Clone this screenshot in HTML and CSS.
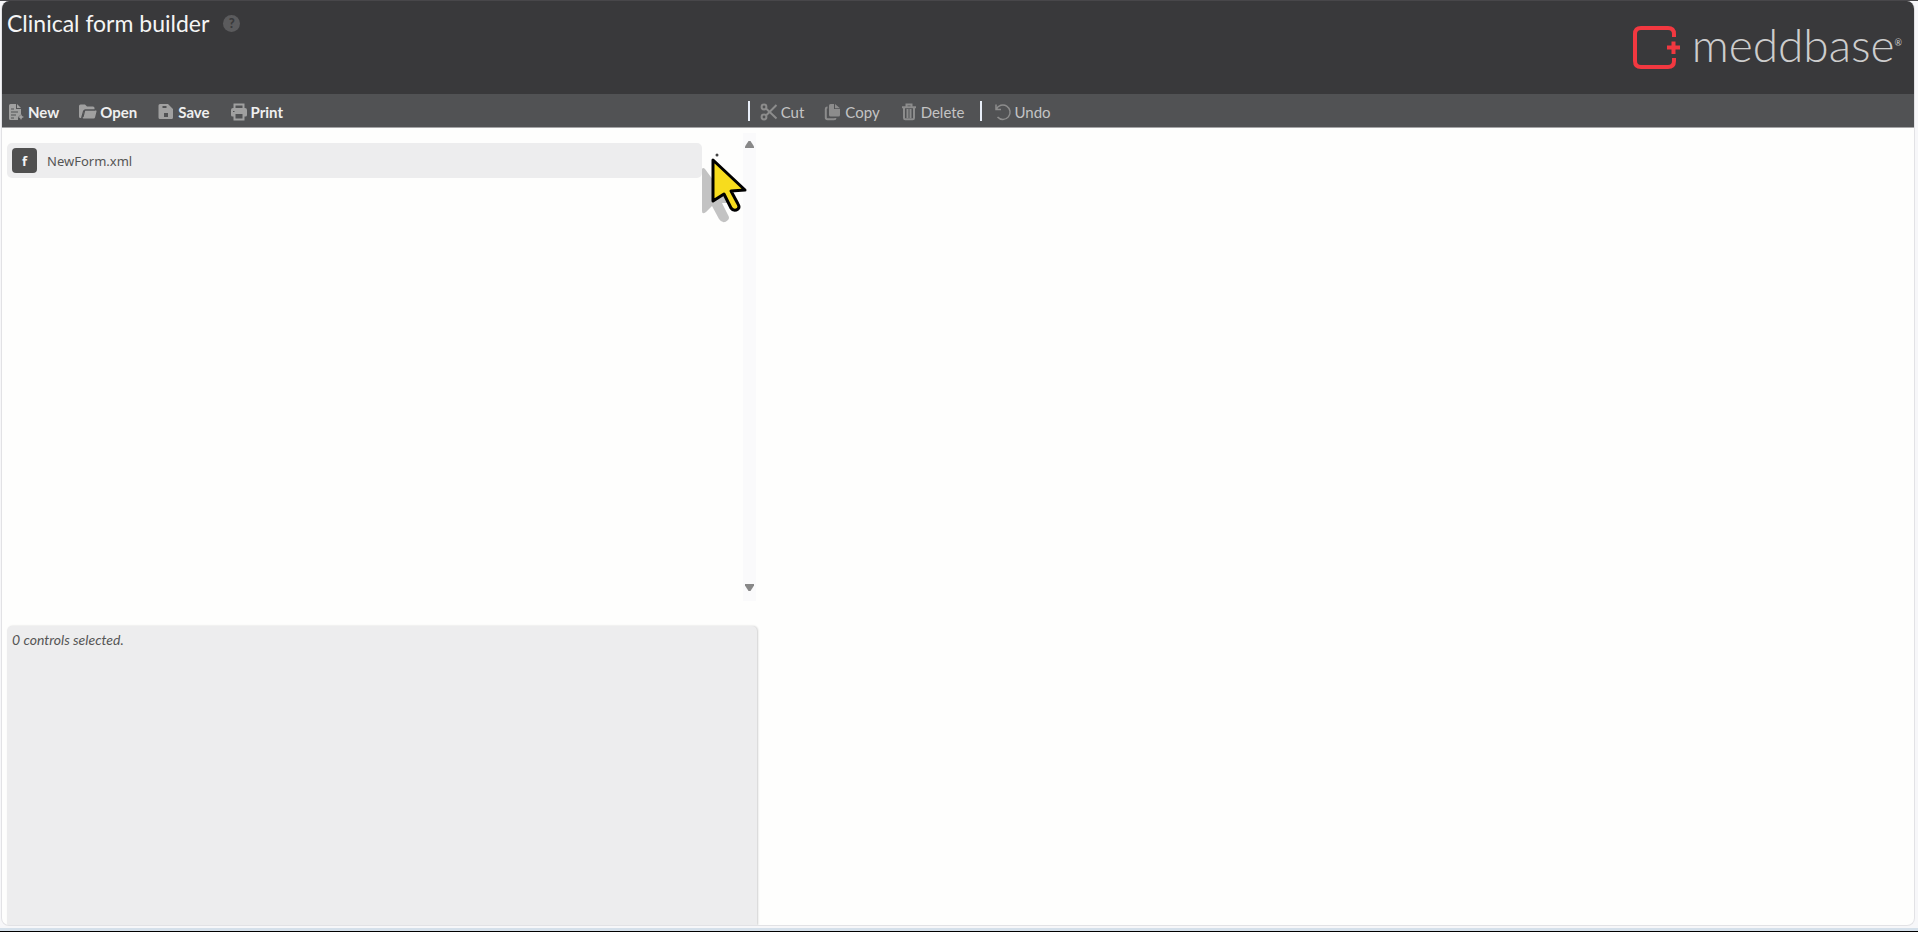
FILE: index.html
```html
<!DOCTYPE html>
<html lang="en">
<head>
<meta charset="utf-8">
<title>Clinical form builder</title>
<link rel="stylesheet" href="styles.css">
</head>
<body>
<div class="window">
  <header class="header">
    <div class="heading">
      <h1 class="title">Clinical form builder</h1>
      <button class="help" type="button" aria-label="Help">?</button>
    </div>
    <div class="brand">
      <svg class="brand-mark" viewBox="0 0 48 44" aria-hidden="true">
        <path d="M41 11V8Q41 2 35 2H8Q2 2 2 8V35Q2 41 8 41H35Q41 41 41 35V32" fill="none" stroke="#f23840" stroke-width="4"/>
        <path d="M34 21.500H47M40.500 15.500V28" fill="none" stroke="#f23840" stroke-width="4"/>
      </svg>
      <span class="brand-name">meddbase</span><span class="brand-reg">®</span>
    </div>
  </header>

  <nav class="toolbar" aria-label="Form tools">
    <div class="tools tools-file">
      <button class="tool" type="button">
        <svg class="icon" viewBox="0 0 18 18" aria-hidden="true"><path class="fill" d="M3.500 1H9v5h5v5.500L11 14v3H3.500Q2 17 2 15.500v-13Q2 1 3.500 1zM10 1l4 4h-4z"/><path d="M4 6h3M4 9h7M4 12h5M4 15h3" class="cut"/><path class="fill" d="M14 11l1 2 2 1-2 1-1 2-1-2-2-1 2-1z"/></svg>
        New</button>
      <button class="tool" type="button">
        <svg class="icon" viewBox="0 0 18 18" aria-hidden="true"><path class="fill" d="M0 3Q0 1.500 1.500 1.500H6l2 2h6q1.500 0 1.500 1.500v1.500H6q-1.500 0-2 1.500l-2 7H1.500Q0 15 0 13.500z"/><path d="M6 7.500h11q.8 0 .5 1l-1.500 6q-.3 1-1.300 1H4.500q-1 0-.7-1L5 8.500q.2-1 1-1z" class="fill"/><path class="cut" d="M4 14l1.500-6q.2-1 1-1H16"/></svg>
        Open</button>
      <button class="tool" type="button">
        <svg class="icon" viewBox="0 0 18 18" aria-hidden="true"><path class="fill" fill-rule="evenodd" d="M3 1h8l5 5v8.500q0 1.500-1.500 1.500H3q-1.500 0-1.500-1.500v-12Q1.500 1 3 1zM5.500 3v2h4V3zM7 10v4h4v-4z"/></svg>
        Save</button>
      <button class="tool" type="button">
        <svg class="icon" viewBox="0 0 18 18" aria-hidden="true"><path class="fill" d="M3 5h12q2 0 2 2v5q0 1.500-1.500 1.500H14V11H4v2.500H2.500Q1 13.500 1 12V7q0-2 2-2z"/><path class="line" d="M4.500 6V1.500h9V6M4.500 11v5.500h9V11"/><path class="cut" d="M3 8.500h1.500"/></svg>
        Print</button>
    </div>
    <div class="tools tools-edit">
      <button class="tool" type="button" disabled>
        <svg class="icon" viewBox="0 0 18 18" aria-hidden="true"><circle class="line" cx="4" cy="4" r="2.400"/><circle class="line" cx="4" cy="14" r="2.400"/><path class="line" d="M6 5.500L16.500 15.500M6 12.500L16.500 2"/></svg>
        Cut</button>
      <button class="tool" type="button" disabled>
        <svg class="icon" viewBox="0 0 18 18" aria-hidden="true"><path class="fill" d="M6.500 1H10v5h6v6q0 1.500-1.500 1.500h-8Q5 13.500 5 12V2.500Q5 1 6.500 1zM11 1l5 4.200h-5z"/><path class="line" d="M3.500 4.500H3Q1.800 4.500 1.800 6v8.500Q1.800 16.200 3.500 16.200H10q1.500 0 1.500-1.200"/></svg>
        Copy</button>
      <button class="tool" type="button" disabled>
        <svg class="icon" viewBox="0 0 18 18" aria-hidden="true"><path class="line" d="M2 4.200h14M6.500 4V1.500h5V4M4 5v10q0 1.300 1.300 1.300h7.400q1.300 0 1.300-1.300V5M7.500 6v9M10.500 6v9"/></svg>
        Delete</button>
      <span class="divider"></span>
      <button class="tool" type="button" disabled>
        <svg class="icon" viewBox="0 0 18 18" aria-hidden="true"><path class="line thin" d="M2 1.500v5h5M2.300 6.300A7.200 7.200 0 1 1 3.500 14"/></svg>
        Undo</button>
    </div>
  </nav>

  <main class="workspace">
    <aside class="side">
      <section class="files" aria-label="Forms">
        <div class="file-row">
          <button class="file" type="button"><span class="badge">f</span>NewForm.xml</button>
          <button class="more" type="button" aria-label="More options">
            <svg class="more-dot" viewBox="0 0 4 4" aria-hidden="true"><circle cx="2" cy="2" r="1.500"/></svg>
            <svg class="pointer" viewBox="0 0 50 70" aria-hidden="true">
              <path class="pointer-shade" d="M2 13V55Q2 59 6 56L12 50L19 63Q23 69 28 64Q30 62 28 59L22 47H30L5 13Q3 11 2 13z"/>
              <path class="pointer-body" d="M13 4V45L24 38L31 52Q34 56 38 53Q40 51 38 48L31 35L45 34Z"/>
            </svg>
          </button>
        </div>
        <div class="scroll">
          <svg class="arrow" viewBox="0 0 9 7" aria-hidden="true"><path d="M3.500 0h2L9 5.500V7H0V5.500z"/></svg>
          <svg class="arrow" viewBox="0 0 9 7" aria-hidden="true"><path d="M3.500 7h2L9 1.500V0H0v1.500z"/></svg>
        </div>
      </section>
      <section class="properties">0 controls selected.</section>
    </aside>
    <section class="canvas" aria-label="Form canvas"></section>
  </main>
</div>
</body>
</html>
```

FILE: styles.css
```css
* { box-sizing: border-box; }

html { height: 100%; }

body {
  margin: 0;
  height: 100%;
  display: flex;
  flex-direction: column;
  padding: 0 3px 5px 1px;
  background: #f7f7f9;
  border-top: 1px solid #48474a;
  border-bottom: 1px solid #000;
  box-shadow: inset 0 -3px 0 #d5e0ea;
  font-family: Lato, Carlito, "Noto Sans", sans-serif;
  color: #555;
}

button {
  border: 0;
  padding: 0;
  background: none;
  font: inherit;
  color: inherit;
}

.window {
  flex: 1;
  display: flex;
  flex-direction: column;
  overflow: hidden;
  background: #fefefd;
  border: 1px solid #e2e2e5;
  border-top: 0;
  border-radius: 8px;
}

.header {
  display: flex;
  justify-content: space-between;
  height: 93px;
  padding: 7px 12px 0 5px;
  background: #39393b;
}

.heading {
  display: flex;
  align-items: center;
  gap: 14px;
  height: 30px;
}

.title {
  margin: 0;
  font-size: 23px;
  font-weight: 400;
  line-height: 30px;
  color: #f5f5f5;
}

.help {
  width: 17px;
  height: 17px;
  border-radius: 50%;
  background: #5b5b5d;
  color: #39393b;
  font-size: 13px;
  font-weight: 900;
  line-height: 17px;
}

.brand {
  display: flex;
  align-items: flex-start;
  color: #cdcdcd;
}

.brand-mark {
  width: 48px;
  height: 44px;
  margin: 18px 11px 0 0;
}

.brand-name {
  font-size: 46px;
  font-weight: 300;
  line-height: 74px;
}

.brand-reg {
  padding-top: 27px;
  font-size: 9px;
  line-height: 16px;
}

.toolbar {
  display: flex;
  height: 34px;
  background: #515254;
  border-bottom: 1px solid #a5a5a7;
}

.tools {
  display: flex;
  align-items: center;
  gap: 20px;
}

.tools-file {
  width: 39%;
  padding-left: 5px;
  font-weight: 700;
  color: #efefef;
}

.tools-edit {
  position: relative;
  padding-left: 12px;
  font-weight: 400;
  color: #c4c4c4;
}

.tools-edit::before {
  content: "";
  position: absolute;
  left: 0;
  width: 2px;
  height: 20px;
  background: #e8eef8;
}

.tool {
  display: flex;
  align-items: center;
  gap: 3px;
  padding-top: 2px;
  font-size: 15px;
  line-height: 20px;
}

.icon {
  width: 18px;
  height: 18px;
  color: #a0a0a0;
}

.tool:disabled .icon { color: #8c8c8c; }

.fill { fill: currentColor; }

.line {
  fill: none;
  stroke: currentColor;
  stroke-width: 2;
}

.thin { stroke-width: 1.5; }

.cut {
  fill: none;
  stroke: #515254;
  stroke-width: 1.2;
}

.divider {
  width: 2px;
  height: 20px;
  margin: 0 -8px 0 -5px;
  background: #e8eef8;
}

.workspace {
  flex: 1;
  display: flex;
}

.side {
  width: 39.5%;
  padding-left: 5px;
  display: grid;
  grid-template-rows: 473fr 299fr;
  gap: 25px;
}

.files {
  display: flex;
  justify-content: space-between;
  padding: 5px 1px 0 0;
}

.file-row {
  flex: 1;
  display: flex;
  align-items: flex-start;
  padding-top: 10px;
}

.file {
  flex: 1;
  display: flex;
  align-items: center;
  gap: 10px;
  height: 35px;
  padding-left: 5px;
  border-radius: 5px;
  background: #ededee;
  font-family: "Noto Sans", sans-serif;
  font-size: 13px;
}

.badge {
  width: 25px;
  height: 25px;
  border-radius: 4px;
  background: #505050;
  color: #f5f5f5;
  font-size: 13px;
  font-weight: 700;
  line-height: 26px;
}

.more {
  position: relative;
  width: 41px;
  height: 35px;
}

.more-dot {
  position: absolute;
  top: 10px;
  left: 13px;
  width: 4px;
  height: 4px;
  fill: #444;
}

.pointer {
  position: absolute;
  top: 13px;
  left: -2px;
  width: 50px;
  height: 70px;
  z-index: 1;
}

.pointer-shade { fill: #c3c3c3; }

.pointer-body {
  fill: #f7dc1d;
  stroke: #000;
  stroke-width: 3;
  stroke-linejoin: round;
}

.scroll {
  display: flex;
  flex-direction: column;
  justify-content: space-between;
  align-items: center;
  width: 13px;
  padding: 8px 0 10px;
  background: #fafafb;
}

.arrow {
  width: 9px;
  height: 7px;
  fill: #888;
}

.properties {
  padding: 4px 5px;
  border-radius: 5px 5px 0 0;
  background: #ededee;
  box-shadow: 1px 0 2px #d0d0d0;
  font-size: 14px;
  font-style: italic;
  line-height: 20px;
}

.canvas { flex: 1; }
```
